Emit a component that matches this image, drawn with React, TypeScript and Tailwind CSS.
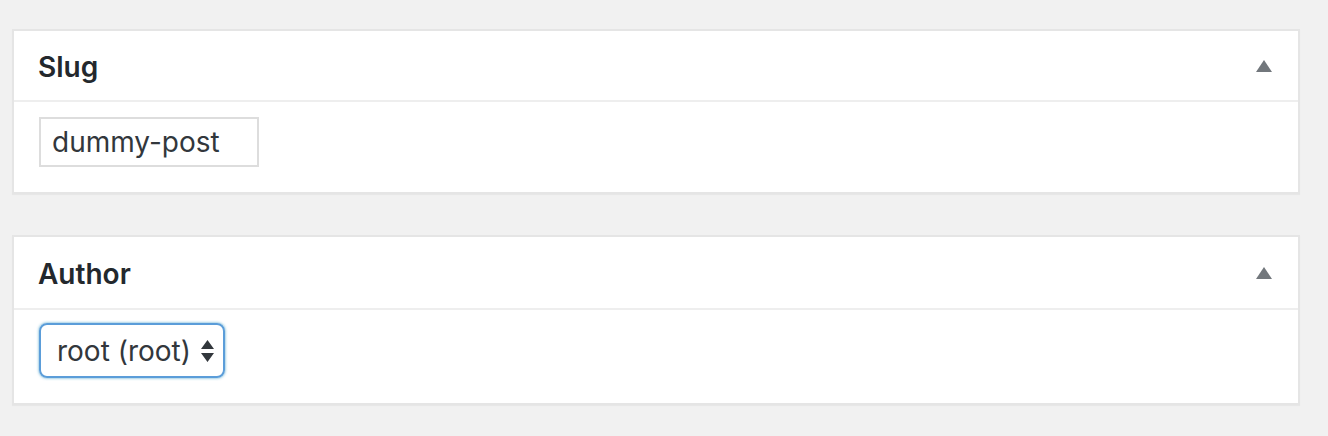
import React from "react";

const Caret = () => (
  <svg width="16" height="12" viewBox="0 0 16 12" className="block">
    <path d="M8 0L16 12H0Z" fill="#72777c" />
  </svg>
);

const Box = ({ title, head, body, children }: { title: string; head: string; body: string; children: React.ReactNode }) => (
  <div className="bg-white border-2 border-[#e5e5e5] shadow-[0_1px_1px_rgba(0,0,0,0.04)]">
    <div className={`${head} flex items-center justify-between pl-[24px] pr-[26px] border-b-2 border-[#eeeeee]`}>
      <h2 className="text-[28px] font-semibold text-[#23282d] pt-[3px]">{title}</h2>
      <Caret />
    </div>
    <div className={body}>{children}</div>
  </div>
);

export default function App() {
  return (
    <div className="min-h-screen bg-[#f1f1f1] pt-[29px] pl-[12px] pr-[28px] font-['Inter',sans-serif]">
      <Box title="Slug" head="h-[71px]" body="pl-[25px] pt-[15px] pb-[25px]">
        <div className="w-[220px] h-[50px] border-2 border-[#dddddd] flex items-center pl-[11px] text-[28px] text-[#32373c]">
          dummy-post
        </div>
      </Box>
      <div className="h-[41px]" />
      <Box title="Author" head="h-[73px]" body="pl-[25px] pt-[13px] pb-[25px]">
        <div className="w-[186px] h-[55px] rounded-[8px] border-2 border-[#5b9dd9] shadow-[0_0_3px_rgba(30,140,190,0.8)] flex items-center justify-between pl-[16px] pr-[9px] text-[28px] text-[#32373c]">
          <span>root (root)</span>
          <svg width="13" height="22" viewBox="0 0 13 22">
            <path d="M6.5 0L13 9H0Z M0 13H13L6.5 22Z" fill="#32373c" />
          </svg>
        </div>
      </Box>
    </div>
  );
}
